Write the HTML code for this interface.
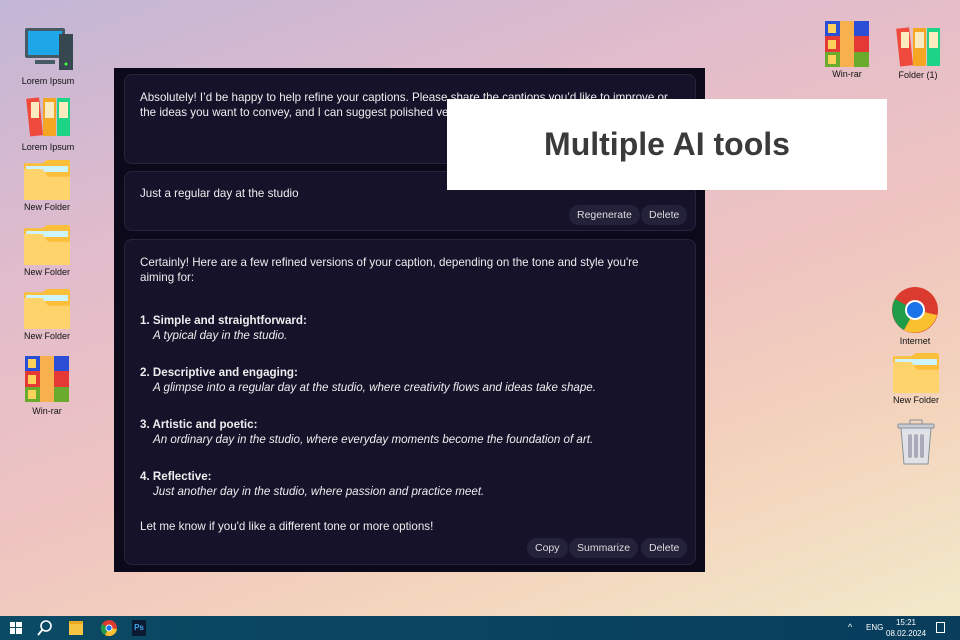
<!DOCTYPE html><html><head><style>
*{margin:0;padding:0;box-sizing:border-box}
body{width:960px;height:640px;overflow:hidden;position:relative;font-family:"Liberation Sans",sans-serif;
background:linear-gradient(160deg,#c2b6d6 0%,#e2bccb 30%,#efc4c0 55%,#f3d4bc 75%,#f2eccb 100%)}
.ic{position:absolute;width:70px;text-align:center;font-size:9px;color:#111}
.ic span{display:block;margin-top:2px}
.folder{width:46px;height:40px;margin:0 auto;position:relative}
.folder:before{content:"";position:absolute;left:0;top:0;width:46px;height:40px;background:#fbbf3a;border-radius:2px;clip-path:polygon(0 8%,40% 8%,50% 0,100% 0,100% 100%,0 100%)}
.folder i{position:absolute;left:2px;top:6px;width:42px;height:6px;background:#cdf3fb}
.folder:after{content:"";position:absolute;left:0;top:9px;width:46px;height:31px;background:#ffd36b;clip-path:polygon(0 0,40% 0,52% 25%,100% 25%,100% 100%,0 100%)}
.win{position:absolute;left:114px;top:68px;width:591px;height:504px;background:#0c0a1a}
.card{position:absolute;left:10px;width:572px;background:#15122a;border:1px solid #27243c;border-radius:8px;color:#eee;font-size:11.6px;line-height:15px;padding:0 15px}
.btn{position:absolute;background:#24213a;color:#ddd;border-radius:10px;font-size:10.5px;height:20px;line-height:20px;padding:0 8px}
.b{font-weight:bold}.it{font-style:italic;padding-left:13px}
.tb{position:absolute;left:0;top:616px;width:960px;height:24px;background:linear-gradient(90deg,#0b4a64,#083d5c)}
</style></head><body>
<div class="ic" style="left:13px;top:26px"><svg width="50" height="48" viewBox="0 0 50 48"><rect x="2" y="2" width="40" height="30" rx="2" fill="#455a64"/><rect x="5" y="5" width="34" height="24" fill="#1ea7e8"/><rect x="12" y="34" width="20" height="4" fill="#455a64"/><rect x="36" y="8" width="14" height="36" fill="#37474f"/><circle cx="43" cy="38" r="1.5" fill="#4f4"/></svg><span style="margin-top:0">Lorem Ipsum</span></div>
<div class="ic" style="left:13px;top:96px"><svg width="48" height="42" viewBox="0 0 48 42"><rect x="4" y="2" width="13" height="38" fill="#f04a3e" transform="rotate(-6 10 20)"/><rect x="19" y="2" width="13" height="38" fill="#f5a623"/><rect x="33" y="2" width="13" height="38" fill="#1dd386"/><rect x="21" y="6" width="9" height="16" fill="#fdebc0"/><rect x="35" y="6" width="9" height="16" fill="#fdebc0"/><rect x="7" y="6" width="8" height="16" fill="#fdebc0"/></svg><span>Lorem Ipsum</span></div>
<div class="ic" style="left:12px;top:160px"><div class="folder"><i></i></div><span>New Folder</span></div>
<div class="ic" style="left:12px;top:225px"><div class="folder"><i></i></div><span>New Folder</span></div>
<div class="ic" style="left:12px;top:289px"><div class="folder"><i></i></div><span>New Folder</span></div>
<div class="ic" style="left:12px;top:356px"><svg width="44" height="46" viewBox="0 0 44 46"><rect width="44" height="15" fill="#2a4fd6"/><rect y="15" width="44" height="16" fill="#e53935"/><rect y="31" width="44" height="15" fill="#6aab2e"/><rect x="15" width="14" height="46" fill="#f6b04e"/><rect x="3" y="3" width="8" height="9" fill="#fcd25a"/><rect x="3" y="19" width="8" height="9" fill="#fcd25a"/><rect x="3" y="34" width="8" height="9" fill="#fcd25a"/></svg><span>Win-rar</span></div>
<div class="ic" style="left:812px;top:21px"><svg width="44" height="46" viewBox="0 0 44 46"><rect width="44" height="15" fill="#2a4fd6"/><rect y="15" width="44" height="16" fill="#e53935"/><rect y="31" width="44" height="15" fill="#6aab2e"/><rect x="15" width="14" height="46" fill="#f6b04e"/><rect x="3" y="3" width="8" height="9" fill="#fcd25a"/><rect x="3" y="19" width="8" height="9" fill="#fcd25a"/><rect x="3" y="34" width="8" height="9" fill="#fcd25a"/></svg><span style="margin-top:0">Win-rar</span></div>
<div class="ic" style="left:883px;top:26px"><svg width="48" height="42" viewBox="0 0 48 42"><rect x="4" y="2" width="13" height="38" fill="#f04a3e" transform="rotate(-6 10 20)"/><rect x="19" y="2" width="13" height="38" fill="#f5a623"/><rect x="33" y="2" width="13" height="38" fill="#1dd386"/><rect x="21" y="6" width="9" height="16" fill="#fdebc0"/><rect x="35" y="6" width="9" height="16" fill="#fdebc0"/><rect x="7" y="6" width="8" height="16" fill="#fdebc0"/></svg><span style="margin-top:0">Folder (1)</span></div>
<div class="ic" style="left:880px;top:287px"><svg width="46" height="46" viewBox="0 0 46 46"><circle cx="23" cy="23" r="23" fill="#db3a2e"/><path d="M23 23 L3 12 A23 23 0 0 0 12 43Z" fill="#1f9d48"/><path d="M23 23 L12 43 A23 23 0 0 0 45 28Z" fill="#fbc02d"/><circle cx="23" cy="23" r="10" fill="#fff"/><circle cx="23" cy="23" r="8" fill="#1a73e8"/></svg><span style="margin-top:1px">Internet</span></div>
<div class="ic" style="left:881px;top:353px"><div class="folder"><i></i></div><span>New Folder</span></div>
<div class="ic" style="left:881px;top:419px"><svg width="40" height="46" viewBox="0 0 40 46"><rect x="2" y="5" width="36" height="4" rx="1" fill="#c8cdd4" stroke="#8a9098"/><rect x="14" y="1" width="12" height="4" fill="none" stroke="#8a9098"/><path d="M5 9 L8 45 H32 L35 9Z" fill="#dfe3e8" stroke="#8a9098"/><rect x="12" y="15" width="4" height="24" rx="2" fill="#aab"/><rect x="18" y="15" width="4" height="24" rx="2" fill="#aab"/><rect x="24" y="15" width="4" height="24" rx="2" fill="#aab"/></svg></div>
<div class="win">
<div class="card" style="top:6px;height:90px;padding-top:15px">Absolutely! I’d be happy to help refine your captions. Please share the captions you’d like to improve or the ideas you want to convey, and I can suggest polished versions with more impact.</div>
<div class="card" style="top:103px;height:60px;padding-top:14px">Just a regular day at the studio
<div class="btn" style="left:444px;top:33px">Regenerate</div><div class="btn" style="left:516px;top:33px">Delete</div></div>
<div class="card" style="top:171px;height:326px;padding-top:15px;padding-right:20px">Certainly! Here are a few refined versions of your caption, depending on the tone and style you're aiming for:
<div style="margin-top:28px" class="b">1. Simple and straightforward:</div><div class="it">A typical day in the studio.</div>
<div style="margin-top:22px" class="b">2. Descriptive and engaging:</div><div class="it">A glimpse into a regular day at the studio, where creativity flows and ideas take shape.</div>
<div style="margin-top:22px" class="b">3. Artistic and poetic:</div><div class="it">An ordinary day in the studio, where everyday moments become the foundation of art.</div>
<div style="margin-top:22px" class="b">4. Reflective:</div><div class="it">Just another day in the studio, where passion and practice meet.</div>
<div style="margin-top:20px">Let me know if you'd like a different tone or more options!</div>
<div class="btn" style="left:402px;top:298px">Copy</div><div class="btn" style="left:444px;top:298px">Summarize</div><div class="btn" style="left:516px;top:298px">Delete</div></div>
</div>
<div style="position:absolute;left:447px;top:99px;width:440px;height:91px;background:#fff;color:#3a3a3a;font-size:32px;font-weight:bold;line-height:91px;text-align:center">Multiple AI tools</div>
<div class="tb">
<svg style="position:absolute;left:10px;top:6px" width="12" height="12"><rect width="5" height="5" fill="#fff"/><rect x="6" width="6" height="5" fill="#fff"/><rect y="6" width="5" height="6" fill="#fff"/><rect x="6" y="6" width="6" height="6" fill="#fff"/></svg>
<svg style="position:absolute;left:37px;top:4px" width="16" height="16"><circle cx="9" cy="6" r="5" fill="none" stroke="#fff" stroke-width="1.6"/><path d="M5.5 9.5 L1 15" stroke="#fff" stroke-width="1.8"/></svg>
<div style="position:absolute;left:69px;top:5px;width:14px;height:14px;background:#f5c542;border-top:3px solid #e8a820"></div>
<svg style="position:absolute;left:101px;top:4px" width="16" height="16"><circle cx="8" cy="8" r="8" fill="#db3a2e"/><path d="M8 8 L1 4 A8 8 0 0 0 4 15Z" fill="#1f9d48"/><path d="M8 8 L4 15 A8 8 0 0 0 16 9Z" fill="#fbc02d"/><circle cx="8" cy="8" r="3.5" fill="#fff"/><circle cx="8" cy="8" r="2.6" fill="#1a73e8"/></svg>
<div style="position:absolute;left:132px;top:4px;width:14px;height:16px;background:#0b1a33;color:#3da8f5;font-size:8px;font-weight:bold;line-height:16px;text-align:center">Ps</div>
<div style="position:absolute;left:848px;top:6px;color:#fff;font-size:9px">^</div>
<div style="position:absolute;left:866px;top:7px;color:#fff;font-size:8px">ENG</div>
<div style="position:absolute;left:886px;top:1px;color:#fff;font-size:8px;text-align:center;line-height:11px;width:40px">15:21<br>08.02.2024</div>
<div style="position:absolute;left:936px;top:6px;width:9px;height:11px;border:1px solid #fff"></div>
</div>
</body></html>
